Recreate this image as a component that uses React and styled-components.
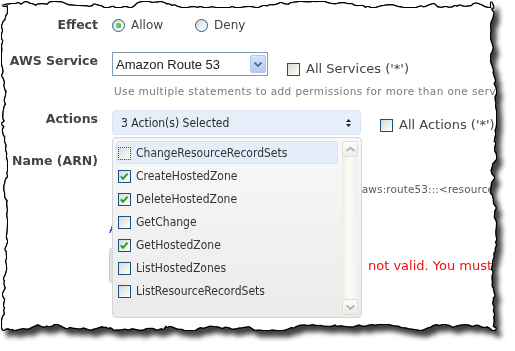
import React from 'react';
import styled, { createGlobalStyle } from 'styled-components';

const GlobalStyle = createGlobalStyle`
  html, body { margin: 0; padding: 0; background: #fff; }
  body { width: 515px; height: 351px; overflow: hidden; font-family: "DejaVu Sans", Verdana, sans-serif; }
`;

function mulberry32(a) {
  return function () {
    a |= 0; a = (a + 0x6d2b79f5) | 0;
    let t = Math.imul(a ^ (a >>> 15), 1 | a);
    t = (t + Math.imul(t ^ (t >>> 7), 61 | t)) ^ t;
    return ((t ^ (t >>> 14)) >>> 0) / 4294967296;
  };
}

function tornPolygon(w, h, depth, seed) {
  const rnd = mulberry32(seed);
  const pts = [];
  let d = depth / 2;
  const step = () => 1.5 + rnd() * 3;
  const jitter = () => {
    d += (rnd() - 0.5) * 3.5;
    if (rnd() < 0.15) d += (rnd() - 0.5) * 5;
    d = Math.max(0, Math.min(depth, d));
    return d;
  };
  for (let x = 0; x < w; x += step()) pts.push([x, jitter()]);
  for (let y = 0; y < h; y += step()) pts.push([w - jitter(), y]);
  for (let x = w; x > 0; x -= step()) pts.push([x, h - jitter()]);
  for (let y = h; y > 0; y -= step()) pts.push([jitter(), y]);
  return `polygon(${pts.map(([x, y]) => `${x.toFixed(1)}px ${y.toFixed(1)}px`).join(',')})`;
}

const CLIP = tornPolygon(494, 328, 6, 7);

const Frame = styled.div`
  padding: 2px 0 0 2px;
  filter: drop-shadow(1px 0 0 #000) drop-shadow(-1px 0 0 #000) drop-shadow(0 1px 0 #000)
    drop-shadow(0 -1px 0 #000) drop-shadow(5px 6px 2.5px rgba(0, 0, 0, 0.75));
`;

const Paper = styled.div`
  position: relative;
  box-sizing: border-box;
  width: 494px;
  height: 328px;
  padding-top: 13px;
  background: #fff;
  overflow: hidden;
  clip-path: ${(p) => p.$clip};
`;

const Row = styled.div`
  display: flex;
  align-items: ${(p) => p.$align || 'flex-start'};
  margin-top: ${(p) => p.$mt || 0}px;
  height: ${(p) => (p.$h ? `${p.$h}px` : 'auto')};
`;

const Label = styled.div`
  width: 96px;
  flex-shrink: 0;
  display: flex;
  justify-content: flex-end;
  white-space: nowrap;
  font-family: "DejaVu Sans", Verdana, sans-serif;
  font-weight: bold;
  font-size: 12.5px;
  line-height: ${(p) => p.$lh || 17}px;
  color: #444;
`;

const Controls = styled.div`
  margin-left: 14px;
  display: flex;
  align-items: ${(p) => p.$align || 'flex-start'};
`;

const Option = styled.label`
  display: flex;
  align-items: center;
  margin-left: ${(p) => p.$ml || 0}px;
  padding-top: ${(p) => p.$pt || 0}px;
`;

const RadioCircle = styled.span`
  box-sizing: border-box;
  width: 13px;
  height: 13px;
  border-radius: 50%;
  border: 1px solid #2a5b8c;
  background: linear-gradient(135deg, #d8d8d2 0%, #f2f2ee 60%, #ffffff 100%);
  display: flex;
  align-items: center;
  justify-content: center;
  &::after {
    content: '';
    display: ${(p) => (p.$checked ? 'block' : 'none')};
    width: 5px;
    height: 5px;
    border-radius: 50%;
    background: radial-gradient(circle at 40% 40%, #6ee86e, #1e9e1e);
  }
`;

const OptText = styled.span`
  margin-left: 6px;
  font-family: "DejaVu Sans", Verdana, sans-serif;
  font-size: ${(p) => p.$size || 12}px;
  line-height: 14px;
  color: #444;
  white-space: nowrap;
`;

const CheckBoxEl = styled.span`
  box-sizing: border-box;
  width: 13px;
  height: 13px;
  flex-shrink: 0;
  border: 1px ${(p) => (p.$focus ? 'dotted' : 'solid')} #1c5180;
  background: linear-gradient(135deg, #d9d9d2 0%, #efefea 55%, #ffffff 100%);
  display: flex;
  align-items: center;
  justify-content: center;
  margin-top: ${(p) => p.$mt || 0}px;
`;

const Checkbox = ({ checked, focus, mt }) => (
  <CheckBoxEl $focus={focus} $mt={mt}>
    {checked && (
      <svg width="11" height="11" viewBox="0 0 11 11">
        <path d="M1.8 5.4 L4 7.8 L8.6 2.6" fill="none" stroke="#21a121" strokeWidth="2" />
      </svg>
    )}
  </CheckBoxEl>
);

const ServiceSelect = styled.div`
  box-sizing: border-box;
  width: 156px;
  height: 24px;
  border: 1px solid #7f9db9;
  background: #fff;
  display: flex;
  align-items: center;
  padding: 0 1px 0 3px;
`;

const SelectValue = styled.span`
  flex: 1;
  font-family: "Liberation Sans", Arial, sans-serif;
  font-size: 13px;
  color: #222;
  white-space: nowrap;
`;

const DropButton = styled.span`
  box-sizing: border-box;
  width: 16px;
  height: 18px;
  border: 1px solid #b4c6ef;
  border-radius: 2px;
  background: linear-gradient(180deg, #d8e3fb 0%, #c3d3f8 50%, #b5c8f5 100%);
  display: flex;
  align-items: center;
  justify-content: center;
`;

const Note = styled.div`
  margin-left: ${(p) => p.$indent}px;
  margin-top: ${(p) => p.$mt || 0}px;
  font-family: "DejaVu Sans", Verdana, sans-serif;
  font-size: 10.5px;
  letter-spacing: ${(p) => p.$ls || 0}px;
  line-height: 14px;
  color: ${(p) => p.$color || '#7a7a7a'};
  white-space: nowrap;
`;

const ActionsField = styled.div`
  position: relative;
  width: 249px;
`;

const MultiSelect = styled.div`
  box-sizing: border-box;
  height: 25px;
  border: 1px solid #dbe6f5;
  border-radius: 4px;
  background: #e6eefa;
  display: flex;
  align-items: center;
  justify-content: space-between;
  padding: 0 9px 0 8px;
  font-family: "DejaVu Sans Condensed", "DejaVu Sans", sans-serif;
  font-stretch: condensed;
  font-size: 12px;
  color: #2a2a2a;
`;

const DropPanel = styled.div`
  position: absolute;
  top: calc(100% + 2px);
  left: 0;
  z-index: 2;
  box-sizing: border-box;
  width: 250px;
  height: 181px;
  border: 1px solid #d6d6d6;
  border-radius: 4px;
  background: linear-gradient(180deg, #f8f8f8 0%, #ebebeb 100%);
  display: flex;
  align-items: flex-start;
  padding: 3px 3px 2px 3px;
`;

const List = styled.div`
  width: 222px;
  display: flex;
  flex-direction: column;
`;

const Item = styled.div`
  box-sizing: border-box;
  height: 23px;
  display: flex;
  align-items: center;
  padding-left: 1px;
  border-radius: 3px;
  border: 1px solid ${(p) => (p.$hl ? '#d5e3f6' : 'transparent')};
  background: ${(p) => (p.$hl ? '#e4eefb' : 'transparent')};
`;

const ItemText = styled.span`
  margin-left: 5px;
  font-family: "DejaVu Sans Condensed", "DejaVu Sans", sans-serif;
  font-stretch: condensed;
  font-size: 12px;
  color: #333;
  white-space: nowrap;
`;

const ScrollBar = styled.div`
  box-sizing: border-box;
  margin-left: 4px;
  width: 16px;
  height: 174px;
  background: linear-gradient(90deg, #eeede6 0%, #fbfbf7 45%, #f1f0ea 100%);
  display: flex;
  flex-direction: column;
  justify-content: space-between;
`;

const ScrollBtn = styled.div`
  box-sizing: border-box;
  width: 16px;
  height: 16px;
  border: 1px solid #dfded6;
  border-radius: 2px;
  background: linear-gradient(180deg, #fbfbf9 0%, #eeede7 100%);
  display: flex;
  align-items: center;
  justify-content: center;
`;

const TextInput = styled.div`
  box-sizing: border-box;
  width: 236px;
  height: 22px;
  border: 1px solid #a5acb5;
  background: #fff;
`;

const LinkRow = styled.div`
  margin-left: 107px;
  margin-top: ${(p) => p.$mt}px;
  display: flex;
  align-items: center;
  gap: ${(p) => p.$gap || 0}px;
  line-height: 16px;
`;

const Link = styled.a`
  font-family: "DejaVu Sans", Verdana, sans-serif;
  font-size: 12px;
  color: #1a47b0;
  text-decoration: none;
  white-space: nowrap;
`;

const GrayButton = styled.button`
  box-sizing: border-box;
  width: 245px;
  height: 35px;
  flex-shrink: 0;
  border: none;
  border-left: 1px solid #cfcfcf;
  border-radius: 3px;
  background: #e0e0e0;
  font-family: "DejaVu Sans", Verdana, sans-serif;
  font-size: 12px;
  color: #333;
`;

const ErrorText = styled.span`
  font-family: "DejaVu Sans", Verdana, sans-serif;
  font-size: 13px;
  color: #f01010;
  white-space: nowrap;
`;

const ChevronDown = ({ color = '#4d6185', w = 7, h = 4, sw = 1.6 }) => (
  <svg width={w + 1} height={h + 1} viewBox={`0 0 ${w + 1} ${h + 1}`}>
    <path d={`M0.5 0.5 L${(w + 1) / 2} ${h} L${w + 0.5} 0.5`} fill="none" stroke={color} strokeWidth={sw} />
  </svg>
);

const ChevronUp = ({ color = '#b4b2a8', w = 8, h = 4, sw = 1.8 }) => (
  <svg width={w + 1} height={h + 1} viewBox={`0 0 ${w + 1} ${h + 1}`}>
    <path d={`M0.5 ${h} L${(w + 1) / 2} 0.8 L${w + 0.5} ${h}`} fill="none" stroke={color} strokeWidth={sw} />
  </svg>
);

const UpDown = () => (
  <svg width="5" height="8" viewBox="0 0 5 8">
    <path d="M0 3 L2.5 0 L5 3 Z M0 5 L2.5 8 L5 5 Z" fill="#222" />
  </svg>
);

const actions = [
  { name: 'ChangeResourceRecordSets', checked: false, hl: true, focus: true },
  { name: 'CreateHostedZone', checked: true },
  { name: 'DeleteHostedZone', checked: true },
  { name: 'GetChange', checked: false },
  { name: 'GetHostedZone', checked: true },
  { name: 'ListHostedZones', checked: false },
  { name: 'ListResourceRecordSets', checked: false },
];

export default function App() {
  return (
    <>
      <GlobalStyle />
      <Frame>
        <Paper $clip={CLIP}>
          <Row $h={20} $align="center">
            <Label $lh={20}>Effect</Label>
            <Controls $align="center">
              <Option>
                <RadioCircle $checked />
                <OptText>Allow</OptText>
              </Option>
              <Option $ml={32}>
                <RadioCircle />
                <OptText>Deny</OptText>
              </Option>
            </Controls>
          </Row>

          <Row $mt={17}>
            <Label>AWS Service</Label>
            <Controls>
              <ServiceSelect>
                <SelectValue>Amazon Route 53</SelectValue>
                <DropButton>
                  <ChevronDown />
                </DropButton>
              </ServiceSelect>
              <Option $ml={19} $pt={10}>
                <Checkbox />
                <OptText $size={13}>All Services ('*')</OptText>
              </Option>
            </Controls>
          </Row>

          <Note $indent={112} $mt={8} $ls={0.4}>
            Use multiple statements to add permissions for more than one service.
          </Note>

          <Row $mt={12}>
            <Label>Actions</Label>
            <Controls>
              <ActionsField>
                <MultiSelect>
                  <span>3 Action(s) Selected</span>
                  <UpDown />
                </MultiSelect>
                <DropPanel>
                  <List>
                    {actions.map((a) => (
                      <Item key={a.name} $hl={a.hl}>
                        <Checkbox checked={a.checked} focus={a.focus} mt={2} />
                        <ItemText>{a.name}</ItemText>
                      </Item>
                    ))}
                  </List>
                  <ScrollBar>
                    <ScrollBtn>
                      <ChevronUp />
                    </ScrollBtn>
                    <ScrollBtn>
                      <ChevronDown color="#b4b2a8" w={8} h={4} sw={1.8} />
                    </ScrollBtn>
                  </ScrollBar>
                </DropPanel>
              </ActionsField>
              <Option $ml={19} $pt={8}>
                <Checkbox />
                <OptText $size={13}>All Actions ('*')</OptText>
              </Option>
            </Controls>
          </Row>

          <Row $mt={17}>
            <Label>Resource Name (ARN)</Label>
            <Controls>
              <TextInput />
            </Controls>
          </Row>

          <Note $indent={294} $mt={8} $color="#5a5a5a" $ls={0.1}>
            Format: arn:aws:route53:::&lt;resource_type&gt;/&lt;resource_id&gt;
          </Note>

          <LinkRow $mt={25}>
            <Link href="#">Add Conditions (optional)</Link>
          </LinkRow>

          <LinkRow $mt={11} $gap={14}>
            <GrayButton>Add Statement</GrayButton>
            <ErrorText>not valid. You must use the correct format.</ErrorText>
          </LinkRow>
        </Paper>
      </Frame>
    </>
  );
}
